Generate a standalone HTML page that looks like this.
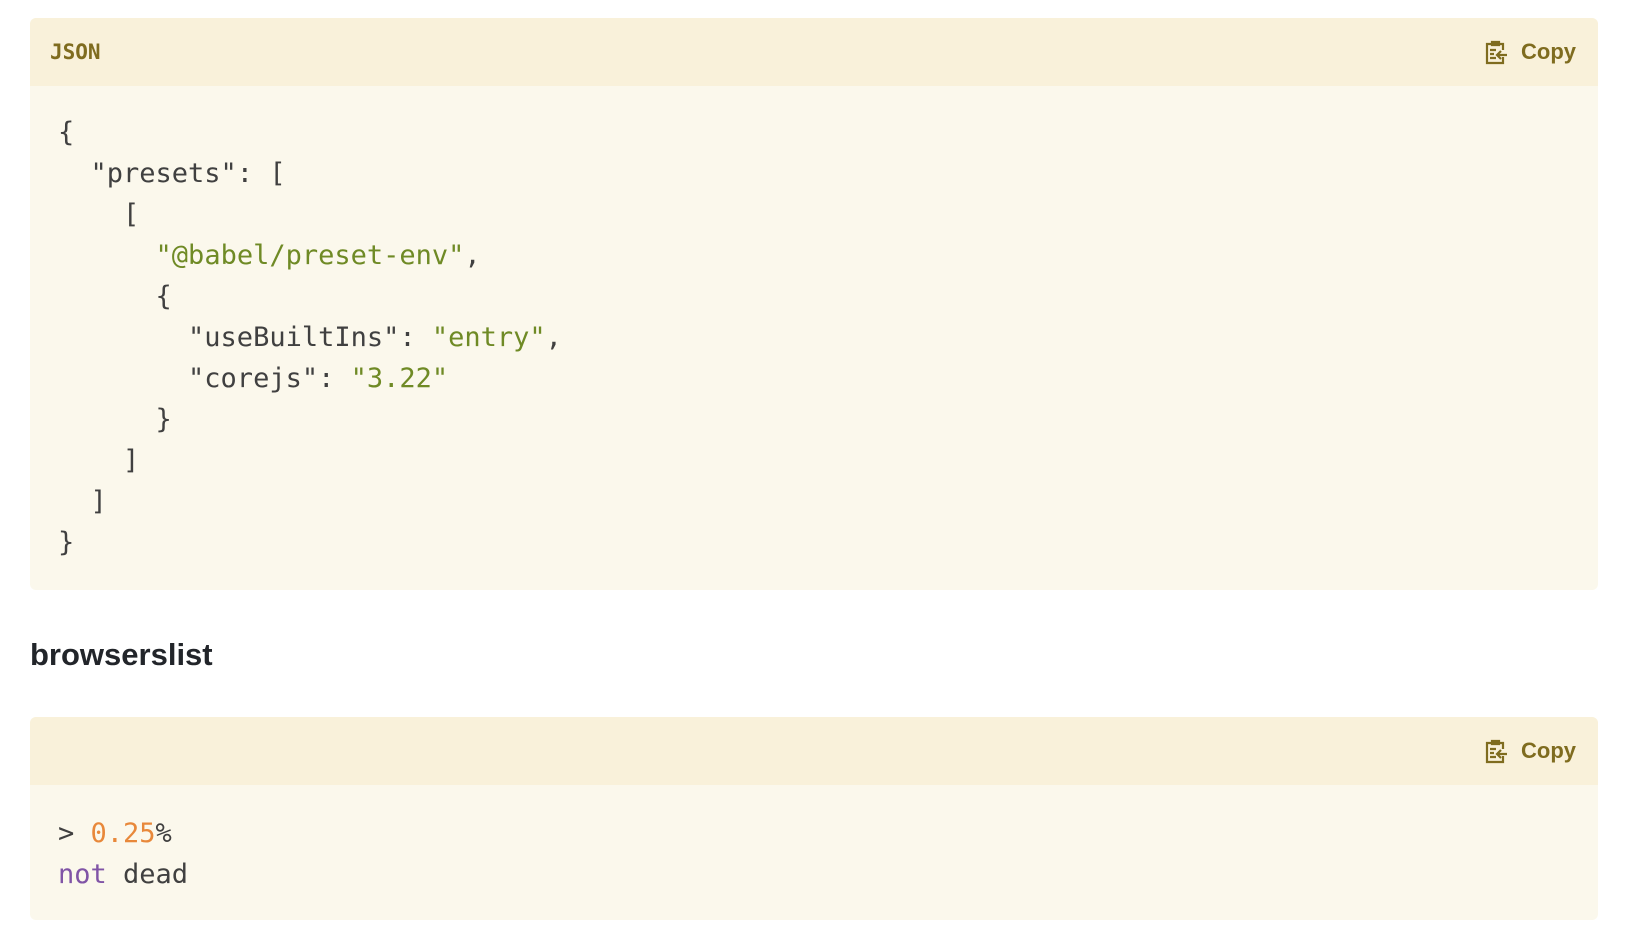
<!DOCTYPE html>
<html><head><meta charset="utf-8"><style>
body{margin:0;width:1642px;height:938px;background:#fff;position:relative;overflow:hidden;font-family:"Liberation Sans",sans-serif}
.box{position:absolute;left:30px;width:1568px;background:#fbf8ec;border-radius:6px;overflow:hidden}
.hd{height:68px;background:#f9f1da;position:relative}
.lbl{position:absolute;left:20px;top:22px;font:bold 21px "DejaVu Sans Mono",monospace;color:#7f6c1f}
.copy{position:absolute;right:22px;top:19px;height:30px;display:flex;align-items:center;color:#7f6c1f;font-weight:bold;font-size:22px}
.copy svg{margin-right:13px}
pre{margin:0;position:absolute;left:28px;font:27px/41px "DejaVu Sans Mono",monospace;color:#404040}
.s{color:#6f8a25}.n{color:#e8883a}.k{color:#8054a6}
h3{position:absolute;left:30px;top:637px;margin:0;font-size:31px;font-weight:bold;color:#22252a;line-height:36px}
</style></head><body>
<div class="box" style="top:18px;height:572px">
<div class="hd"><div class="lbl">JSON</div>
<div class="copy"><svg width="24" height="25" viewBox="0 0 24 25" fill="none" stroke="#7f6c1f" stroke-width="2.2"><path d="M8 4H3v19h16v-6M15 4h4v6"/><path d="M8 5V2h7v3z" fill="#7f6c1f"/><path d="M6 10h6M6 14h4M6 18h6M23 15h-9M17 11l-4 4 4 4"/></svg>Copy</div></div>
<pre style="top:94px">{
  "presets": [
    [
      <span class="s">"@babel/preset-env"</span>,
      {
        "useBuiltIns": <span class="s">"entry"</span>,
        "corejs": <span class="s">"3.22"</span>
      }
    ]
  ]
}</pre>
</div>
<h3>browserslist</h3>
<div class="box" style="top:717px;height:203px">
<div class="hd">
<div class="copy"><svg width="24" height="25" viewBox="0 0 24 25" fill="none" stroke="#7f6c1f" stroke-width="2.2"><path d="M8 4H3v19h16v-6M15 4h4v6"/><path d="M8 5V2h7v3z" fill="#7f6c1f"/><path d="M6 10h6M6 14h4M6 18h6M23 15h-9M17 11l-4 4 4 4"/></svg>Copy</div></div>
<pre style="top:96px">&gt; <span class="n">0.25</span>%
<span class="k">not</span> dead</pre>
</div>
</body></html>
